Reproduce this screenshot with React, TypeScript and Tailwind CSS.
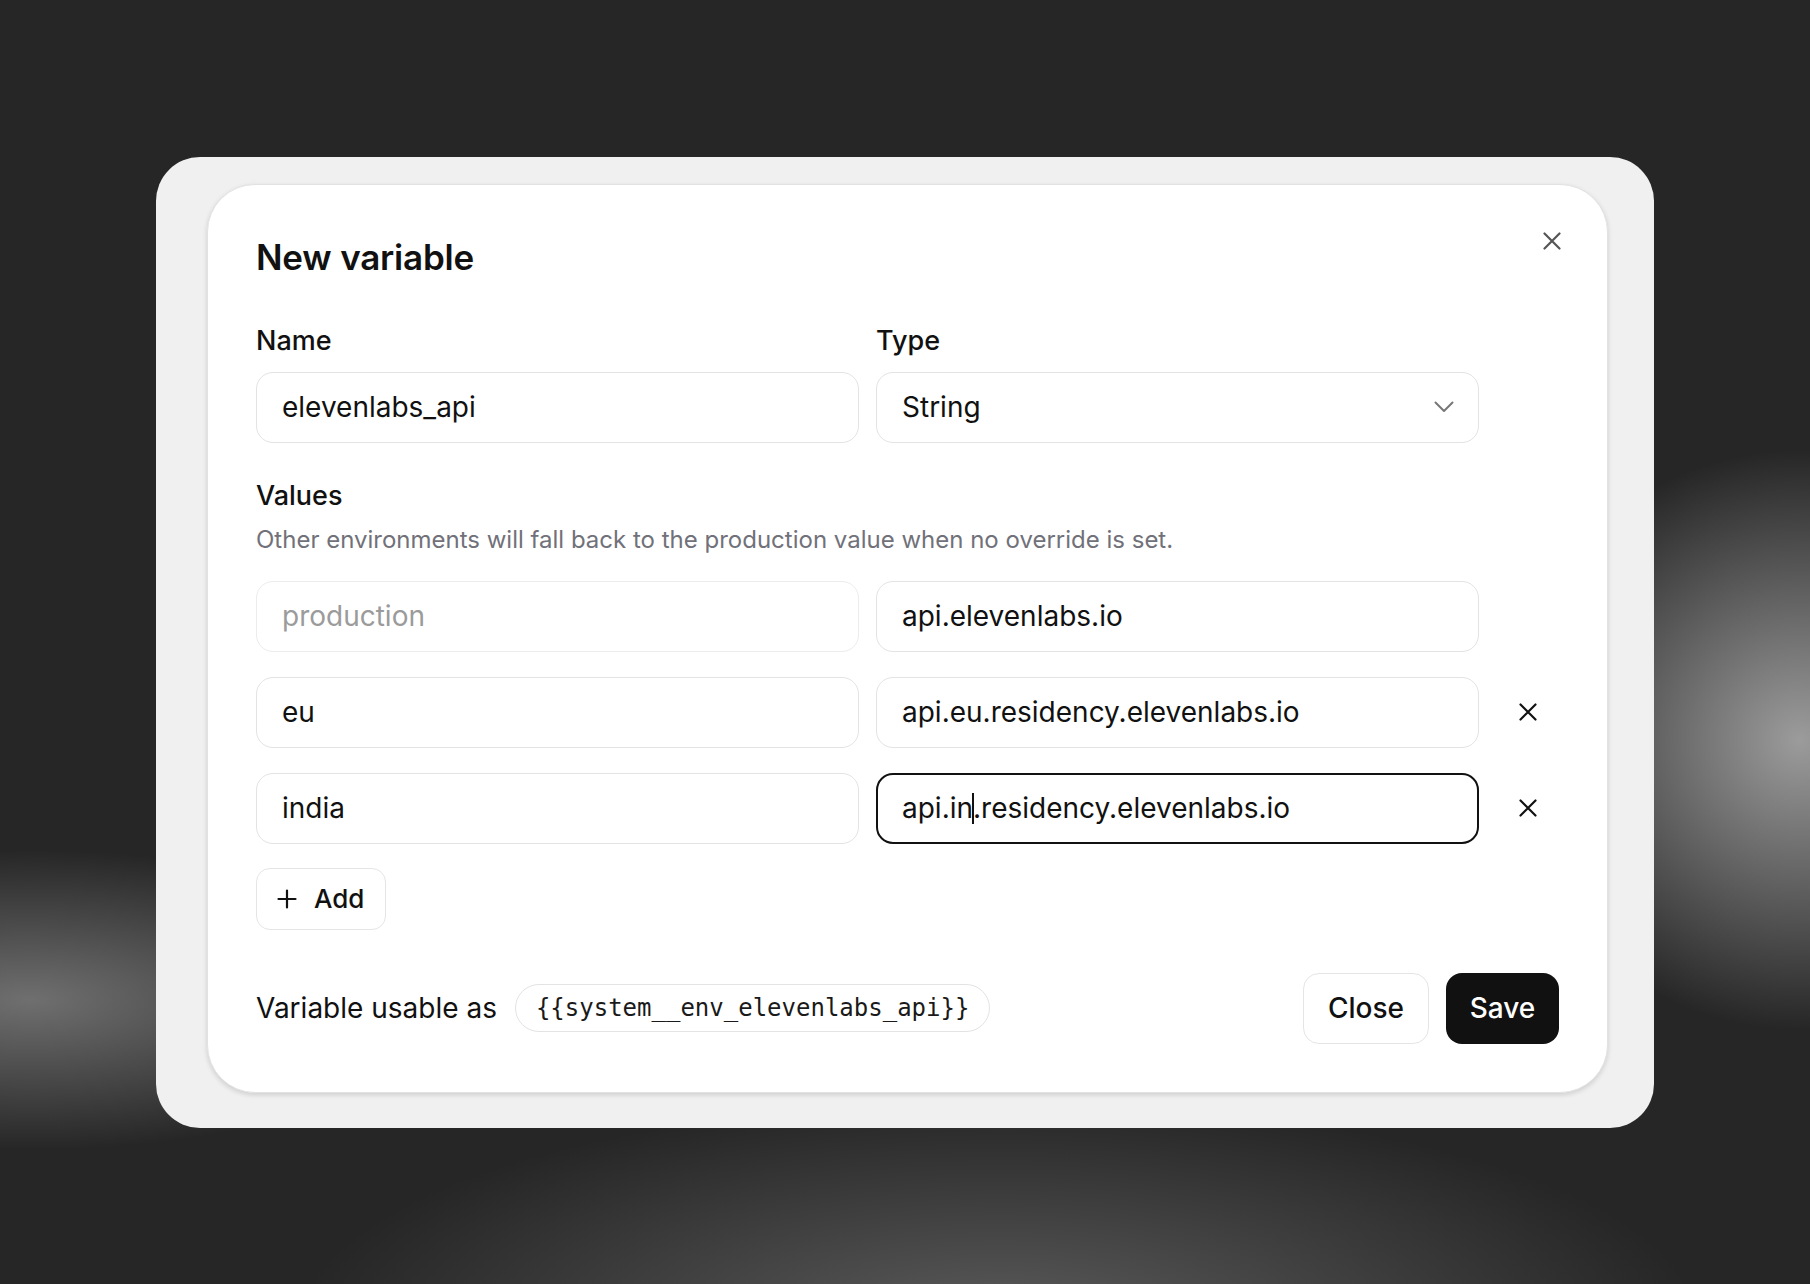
import React from "react";

function CrossIcon({ className = "" }: { className?: string }) {
  return (
    <svg width="18" height="18" viewBox="0 0 18 18" fill="none" className={className}>
      <path d="M1.5 1.5L16.5 16.5M16.5 1.5L1.5 16.5" stroke="currentColor" strokeWidth="2.2" strokeLinecap="round" />
    </svg>
  );
}

function Field({
  children,
  muted = false,
  focused = false,
}: {
  children: React.ReactNode;
  muted?: boolean;
  focused?: boolean;
}) {
  const base = "h-[71px] flex items-center rounded-[17px] bg-white text-[28px] leading-none";
  if (focused) {
    return <div className={base + " border-2 border-[#111111] px-[24px] text-[#111111]"}>{children}</div>;
  }
  if (muted) {
    return <div className={base + " border border-[#ececec] px-[25px] text-[#9b9b9b]"}>{children}</div>;
  }
  return <div className={base + " border border-[#e3e3e3] px-[25px] text-[#111111]"}>{children}</div>;
}

const rows = [
  { env: "production", value: "api.elevenlabs.io", removable: false },
  { env: "eu", value: "api.eu.residency.elevenlabs.io", removable: true },
];

export default function App() {
  return (
    <div className="h-[1284px] w-full flex items-center justify-center bg-[#262626] bg-[radial-gradient(ellipse_420px_150px_at_30px_1000px,rgba(160,160,160,0.6),transparent),radial-gradient(ellipse_300px_290px_at_1800px_740px,rgba(185,185,185,0.8),transparent),radial-gradient(ellipse_700px_220px_at_1000px_1320px,rgba(125,125,125,0.6),transparent)] font-['Inter','Noto_Sans',sans-serif] text-[#111111]">
      <div className="w-[1498px] h-[971px] rounded-[44px] bg-[#f0f0f0] pl-[51px] pt-[27px] pr-[46px] pb-[35px]">
        <div className="h-full rounded-[48px] bg-white border border-[#e2e2e2] shadow-[0_2px_5px_rgba(0,0,0,0.14)] p-[48px] flex flex-col">
          <div className="flex items-start justify-between">
            <h1 className="mt-[4px] text-[35px] leading-[40px] font-semibold tracking-[-0.2px]">New variable</h1>
            <button className="-mt-[8px] -mr-[9px] w-[32px] h-[32px] flex items-center justify-center text-[#555555]">
              <CrossIcon />
            </button>
          </div>

          <div className="mt-[48px] grid grid-cols-[603px_603px_1fr] gap-x-[17px]">
            <div>
              <div className="text-[27px] leading-[32px] font-medium">Name</div>
              <div className="mt-[15px]">
                <Field>elevenlabs_api</Field>
              </div>
            </div>
            <div>
              <div className="text-[27px] leading-[32px] font-medium">Type</div>
              <div className="mt-[15px] h-[71px] flex items-center justify-between rounded-[17px] border border-[#e3e3e3] bg-white pl-[25px] pr-[24px] text-[28px] leading-none">
                <span>String</span>
                <svg width="20" height="12" viewBox="0 0 20 12" fill="none">
                  <path d="M1.5 1.5L10 10L18.5 1.5" stroke="#777777" strokeWidth="2" strokeLinecap="round" strokeLinejoin="round" />
                </svg>
              </div>
            </div>
          </div>

          <div className="mt-[37px] text-[27px] leading-[32px] font-medium">Values</div>
          <div className="mt-[14px] text-[24px] leading-[28px] text-[#71717a]">
            Other environments will fall back to the production value when no override is set.
          </div>

          <div className="mt-[27px] flex flex-col gap-[25px]">
            {rows.map((r) => (
              <div key={r.env} className="grid grid-cols-[603px_603px_1fr] gap-x-[17px] items-center">
                <Field muted={!r.removable}>{r.env}</Field>
                <Field>{r.value}</Field>
                {r.removable ? (
                  <button className="h-[48px] flex items-center justify-center text-[#111111]">
                    <CrossIcon />
                  </button>
                ) : (
                  <div />
                )}
              </div>
            ))}
            <div className="grid grid-cols-[603px_603px_1fr] gap-x-[17px] items-center">
              <Field>india</Field>
              <Field focused>
                <span>api.in</span>
                <span className="inline-block w-[2px] h-[31px] bg-[#111111] -mx-[1px]" />
                <span>.residency.elevenlabs.io</span>
              </Field>
              <button className="h-[48px] flex items-center justify-center text-[#111111]">
                <CrossIcon />
              </button>
            </div>
          </div>

          <div className="mt-[24px]">
            <button className="h-[62px] flex items-center gap-[17px] rounded-[14px] border border-[#e5e5e5] bg-white pl-[20px] pr-[21px] text-[26px] font-medium">
              <svg width="20" height="20" viewBox="0 0 20 20" fill="none">
                <path d="M10 1.5V18.5M1.5 10H18.5" stroke="#111111" strokeWidth="2.2" strokeLinecap="round" />
              </svg>
              <span>Add</span>
            </button>
          </div>

          <div className="mt-auto flex items-center justify-between">
            <div className="flex items-center gap-[18px]">
              <span className="text-[28px]">Variable usable as</span>
              <span className="h-[48px] flex items-center rounded-full border border-[#e3e3e3] px-[20px] font-['DejaVu_Sans_Mono',monospace] text-[24px] text-[#1a1a1a]">
                {"{{system__env_elevenlabs_api}}"}
              </span>
            </div>
            <div className="flex items-center gap-[17px]">
              <button className="h-[71px] w-[126px] rounded-[16px] border border-[#e5e5e5] bg-white text-[28px] font-medium">
                Close
              </button>
              <button className="h-[71px] w-[113px] rounded-[16px] bg-[#111111] text-white text-[28px] font-medium">
                Save
              </button>
            </div>
          </div>
        </div>
      </div>
    </div>
  );
}
